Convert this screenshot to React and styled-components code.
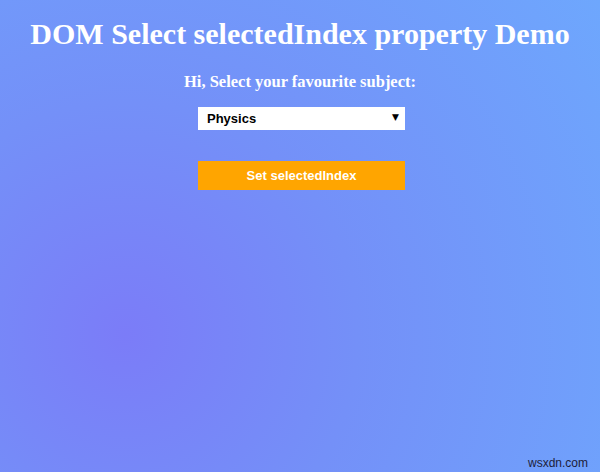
import React, { useState } from 'react'
import styled, { createGlobalStyle } from 'styled-components'

const GlobalStyle = createGlobalStyle`
  html, body {
    margin: 0;
    padding: 0;
  }
  body {
    width: 600px;
    height: 472px;
    overflow: hidden;
  }
`

const Page = styled.div`
  position: relative;
  width: 600px;
  height: 472px;
  box-sizing: border-box;
  display: flex;
  flex-direction: column;
  align-items: center;
  padding-top: 16px;
  background: radial-gradient(circle at 125px 335px, #7b7cf8 0%, #7490f8 40%, #6ea7fd 100%);
  font-family: "Liberation Serif", "Times New Roman", serif;
`
const Title = styled.h1`
  margin: 0;
  color: #fff;
  font-size: 30px;
  font-weight: 700;
  line-height: 36px;
`
const Prompt = styled.h3`
  margin: 20px 0 0;
  color: #fff;
  font-size: 16.5px;
  font-weight: 700;
  line-height: 20px;
`
const Controls = styled.div`
  width: 207px;
  margin-left: 3px;
  margin-top: 15px;
  display: flex;
  flex-direction: column;
  gap: 31px;
`
const SelectWrap = styled.div`
  position: relative;
`
const Select = styled.select`
  width: 100%;
  height: 23px;
  box-sizing: border-box;
  border: none;
  padding: 0 0 0 9px;
  background: #fff;
  font-family: "Liberation Sans", Arial, sans-serif;
  font-size: 13px;
  font-weight: 700;
  color: #000;
  appearance: none;
  outline: none;
`
const Arrow = styled.span`
  position: absolute;
  right: 6px;
  top: 5px;
  font-size: 9px;
  color: #000;
  pointer-events: none;
  font-family: "DejaVu Sans", sans-serif;
`
const Button = styled.button`
  width: 100%;
  height: 29px;
  border: none;
  background: #ffa500;
  color: #fff;
  font-family: "Liberation Sans", Arial, sans-serif;
  font-size: 13px;
  font-weight: 700;
  cursor: pointer;
`
const Watermark = styled.span`
  position: absolute;
  right: 12px;
  bottom: 2px;
  color: #1d1d3a;
  font-family: "Liberation Sans", Arial, sans-serif;
  font-size: 12px;
  line-height: 14px;
`

const subjects = ['Maths', 'Physics', 'Chemistry', 'Biology']

const App = () => {
  const [index, setIndex] = useState(1)

  return (
    <Page>
      <GlobalStyle />
      <Title>DOM Select selectedIndex property Demo</Title>
      <Prompt>Hi, Select your favourite subject:</Prompt>
      <Controls>
        <SelectWrap>
          <Select value={index} onChange={(e) => setIndex(Number(e.target.value))}>
            {subjects.map((s, i) => (
              <option key={s} value={i}>{s}</option>
            ))}
          </Select>
          <Arrow>▼</Arrow>
        </SelectWrap>
        <Button onClick={() => setIndex(2)}>Set selectedIndex</Button>
      </Controls>
      <Watermark>wsxdn.com</Watermark>
    </Page>
  )
}

export default App
